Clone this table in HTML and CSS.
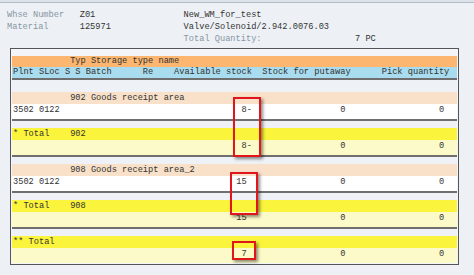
FILE: index.html
```html
<!DOCTYPE html>
<html>
<head>
<meta charset="utf-8">
<link rel="stylesheet" href="styles.css">
</head>
<body>
<div class="topbar"></div>
<div class="info">
  <div class="info-row"><span class="lbl">Whse Number</span><span class="val">Z01</span><span class="desc">New_WM_for_test</span></div>
  <div class="info-row"><span class="lbl">Material</span><span class="val">125971</span><span class="desc">Valve/Solenoid/2.942.0076.03</span></div>
  <div class="info-row"><span class="spacer"></span><span class="lbl qty-lbl">Total Quantity:</span><span class="desc">7 PC</span></div>
</div>
<div class="list">
  <div class="row head1"><span class="indent">Typ Storage type name</span></div>
  <div class="row head2"><span class="key">Plnt SLoc S S Batch      Re</span><span class="avail">Available stock</span><span class="put">Stock for putaway</span><span class="pick">Pick quantity</span></div>

  <div class="group first">
    <div class="row area"><span class="indent">902 Goods receipt area</span></div>
    <div class="row data white"><span class="key">3502 0122</span><span class="avail">8-</span><span class="put">0 </span><span class="pick">0 </span></div>
  </div>
  <div class="group">
    <div class="row total"><span class="key">* Total    902</span></div>
    <div class="row data pale"><span class="key"></span><span class="avail">8-</span><span class="put">0 </span><span class="pick">0 </span></div>
  </div>
  <div class="group">
    <div class="row area"><span class="indent">908 Goods receipt area_2</span></div>
    <div class="row data white"><span class="key">3502 0122</span><span class="avail">15 </span><span class="put">0 </span><span class="pick">0 </span></div>
  </div>
  <div class="group">
    <div class="row total"><span class="key">* Total    908</span></div>
    <div class="row data pale"><span class="key"></span><span class="avail">15 </span><span class="put">0 </span><span class="pick">0 </span></div>
  </div>
  <div class="group">
    <div class="row total"><span class="key">** Total</span></div>
    <div class="row data pale"><span class="key"></span><span class="avail">7 </span><span class="put">0 </span><span class="pick">0 </span></div>
  </div>

  <div class="mark mark1"></div>
  <div class="mark mark2"></div>
  <div class="mark mark3"></div>
</div>
</body>
</html>
```
FILE: styles.css
```css
html, body {
  margin: 0;
  padding: 0;
}
body {
  width: 474px;
  height: 275px;
  overflow: hidden;
  background: #edf1f6;
  font-family: "Liberation Mono", "DejaVu Sans Mono", monospace;
  font-size: 8.667px;
  color: #333;
}
.topbar {
  height: 2px;
  background: #dde3ea;
  border-bottom: 1px solid #b3bcc6;
}
.info {
  padding: 6px 0 0 7px;
}
.info-row {
  display: flex;
  height: 12px;
  line-height: 12px;
  white-space: pre;
}
.lbl {
  width: 14ch;
  color: #8896a3;
}
.val {
  width: 20ch;
  color: #333;
}
.spacer {
  width: 34ch;
}
.qty-lbl {
  width: 33ch;
}
.desc {
  color: #333;
}
.list {
  position: relative;
  margin: 3px 0 0 10px;
  width: 445px;
  border: 1px solid #555;
  padding: 7px 1px 1px 1px;
  background: #f3f6f9;
}
.row {
  display: flex;
  white-space: pre;
  padding-left: 1px;
  color: #333;
}
.indent {
  padding-left: 11ch;
}
.key {
  width: 31ch;
}
.avail {
  width: 15ch;
  text-align: right;
}
.put {
  width: 19ch;
  text-align: right;
}
.pick {
  width: 19ch;
  text-align: right;
}
.head1 {
  height: 11px;
  line-height: 11px;
  background: #fcb66f;
}
.head2 {
  height: 11px;
  line-height: 11px;
  background: #a8dcee;
}
.group {
  border-top: 2px solid #6f6f6f;
  padding-top: 7px;
  background: #eef2f6;
}
.group.first {
  padding-top: 12px;
}
.area {
  height: 12px;
  line-height: 12px;
  background: #f8e1c8;
}
.total {
  height: 12px;
  line-height: 12px;
  background: #fbf43c;
}
.data {
  height: 15px;
  line-height: 13px;
}
.white {
  background: #ffffff;
}
.pale {
  background: #fdfac9;
}
.mark {
  position: absolute;
  box-sizing: border-box;
  border: 2px solid #e0161c;
  box-shadow: 2px 2px 3px rgba(0, 0, 0, 0.45);
}
.mark1 {
  left: 222px;
  top: 48px;
  width: 28px;
  height: 60px;
}
.mark2 {
  left: 219px;
  top: 123px;
  width: 28px;
  height: 43px;
}
.mark3 {
  left: 221px;
  top: 192px;
  width: 24px;
  height: 19px;
}
```
